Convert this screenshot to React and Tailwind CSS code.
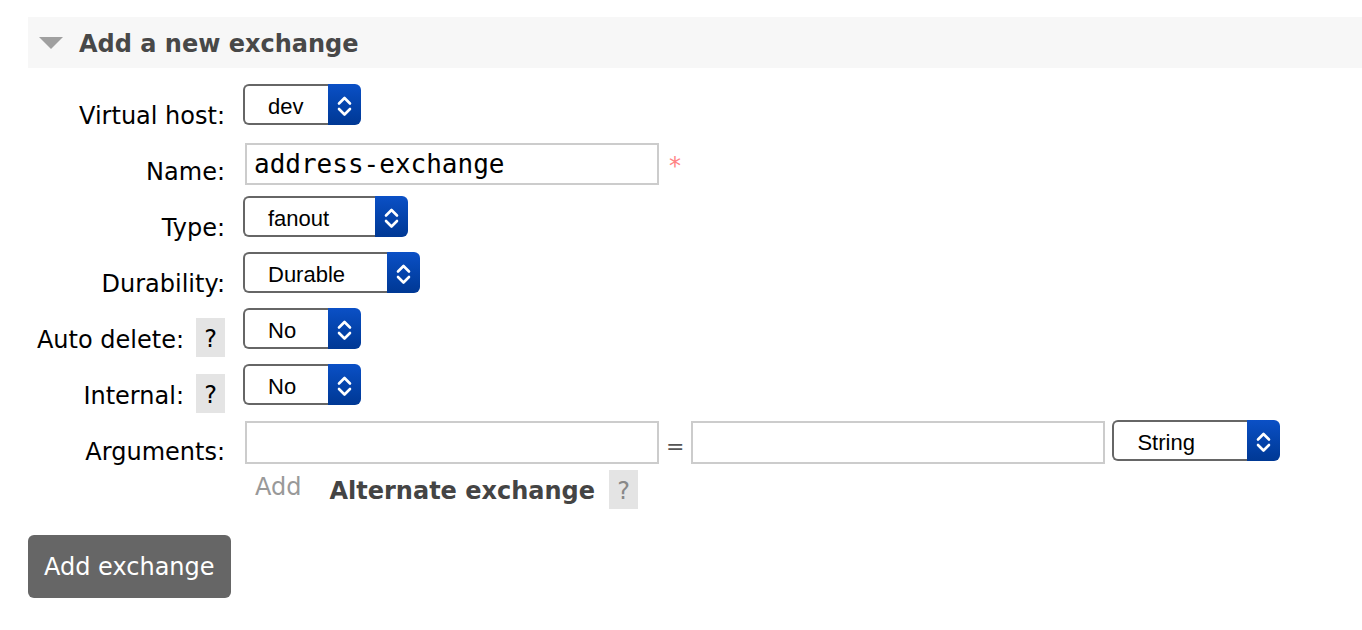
import React from "react";

const verdana = { fontFamily: "Verdana, 'DejaVu Sans', sans-serif" };

function Chevrons() {
  return (
    <svg width="33" height="41" viewBox="0 0 33 41" fill="none">
      <path d="M11 19.5 L16.5 14 L22 19.5" stroke="white" strokeWidth="2.6" strokeLinecap="round" strokeLinejoin="round" />
      <path d="M11 25 L16.5 30.5 L22 25" stroke="white" strokeWidth="2.6" strokeLinecap="round" strokeLinejoin="round" />
    </svg>
  );
}

function Select({ value, width }) {
  return (
    <div className={`flex h-[41px] ${width}`}>
      <div className="flex-1 flex items-center pl-[23px] pt-[4px] border-2 border-r-0 border-[#666] rounded-l-[6px] bg-white text-[22px] text-black font-['Liberation_Sans',Arial,sans-serif]">
        {value}
      </div>
      <div className="w-[33px] rounded-r-[6px] bg-gradient-to-b from-[#0b50c6] to-[#003894] flex items-center justify-center">
        <Chevrons />
      </div>
    </div>
  );
}

function Help({ muted }) {
  return (
    <span
      className={`w-[29px] h-[39px] bg-[#e4e4e4] flex items-center justify-center pt-[2px] text-[24px] ${muted ? "text-[#888]" : "text-black"}`}
    >
      ?
    </span>
  );
}

function Row({ label, help, children, top = "pt-0" }) {
  return (
    <div className="flex h-[56px]">
      <div className="w-[197px] flex justify-end items-start gap-[12px]">
        <span className="pt-[18px] text-[24px] leading-[28px] text-black whitespace-nowrap">{label}</span>
        {help && (
          <span className="pt-[10px]">
            <Help />
          </span>
        )}
      </div>
      <div className={`ml-[18px] flex items-start ${top}`}>{children}</div>
    </div>
  );
}

export default function App() {
  return (
    <div className="min-h-screen bg-white pt-[17px] pl-[28px]" style={verdana}>
      {/* header */}
      <div className="h-[51px] bg-[#f7f7f7] flex items-center">
        <svg width="24" height="12" viewBox="0 0 24 12" className="ml-[11px] mt-[1px]">
          <path d="M0 0 H24 L12 12 Z" fill="#a0a0a0" />
        </svg>
        <h2 className="ml-[16px] mt-[2px] text-[24px] font-bold text-[#484848]">Add a new exchange</h2>
      </div>

      <div className="mt-[16px]">
        <Row label="Virtual host:">
          <Select value="dev" width="w-[118px]" />
        </Row>
        <Row label="Name:" top="pt-[3px]">
          <div className="ml-[2px] w-[414px] h-[42px] border-2 border-[#ccc] flex items-center pl-[7px] pt-[1px] text-[26px] text-black font-['DejaVu_Sans_Mono',monospace]">
            address-exchange
          </div>
          <span className="ml-[10px] mt-[5px] text-[24px] text-[#ff8383]">*</span>
        </Row>
        <Row label="Type:">
          <Select value="fanout" width="w-[165px]" />
        </Row>
        <Row label="Durability:">
          <Select value="Durable" width="w-[177px]" />
        </Row>
        <Row label="Auto delete:" help>
          <Select value="No" width="w-[118px]" />
        </Row>
        <Row label="Internal:" help>
          <Select value="No" width="w-[118px]" />
        </Row>

        {/* arguments */}
        <div className="flex">
          <div className="w-[197px] flex justify-end items-start">
            <span className="pt-[18px] text-[24px] leading-[28px] text-black">Arguments:</span>
          </div>
          <div className="ml-[18px] flex flex-col">
            <div className="flex items-start">
              <div className="ml-[2px] mt-[1px] w-[414px] h-[43px] border-2 border-[#ccc]"></div>
              <span className="ml-[7px] mt-[10px] text-[22px] text-[#555]">=</span>
              <div className="ml-[7px] mt-[1px] w-[414px] h-[43px] border-2 border-[#ccc]"></div>
              <div className="ml-[7px]">
                <Select value="String" width="w-[168px]" />
              </div>
            </div>
            <div className="flex items-start">
              <span className="ml-[12px] mt-[9px] text-[24px] leading-[28px] text-[#999]">Add</span>
              <span className="ml-[28px] mt-[13px] text-[24px] leading-[28px] font-bold text-[#444]">Alternate exchange</span>
              <span className="ml-[14px] mt-[6px]">
                <Help muted />
              </span>
            </div>
          </div>
        </div>
      </div>

      <button className="mt-[26px] h-[63px] px-[16px] rounded-[6px] bg-[#666] text-white text-[24px]" style={verdana}>
        Add exchange
      </button>
    </div>
  );
}
